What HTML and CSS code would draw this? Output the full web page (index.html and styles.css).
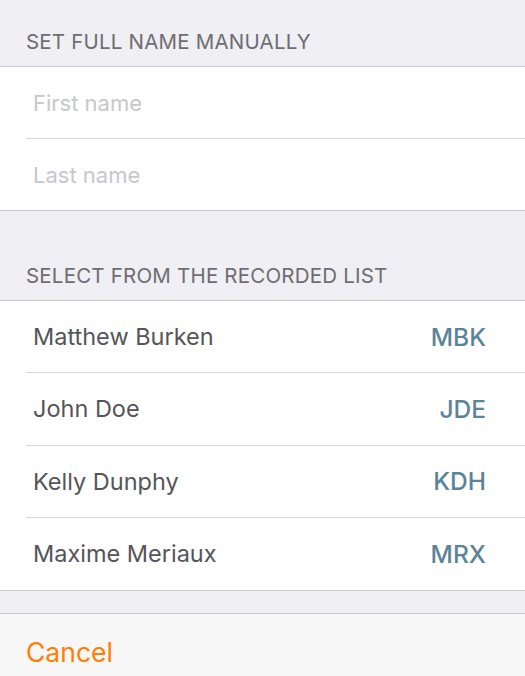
FILE: index.html
```html
<!DOCTYPE html>
<html lang="en">
<head>
    <meta charset="UTF-8">
    <meta name="viewport" content="width=device-width, initial-scale=1.0">
    <title>Select Name</title>
    <link rel="stylesheet" href="styles.css">
</head>
<body>
    <div class="sheet">
        <div class="section-header">SET FULL NAME MANUALLY</div>
        <div class="group">
            <div class="field"><input type="text" placeholder="First name"></div>
            <div class="field"><input type="text" placeholder="Last name"></div>
        </div>

        <div class="section-header second">SELECT FROM THE RECORDED LIST</div>
        <ul class="group people">
            <li><span class="name">Matthew Burken</span><span class="code">MBK</span></li>
            <li><span class="name">John Doe</span><span class="code">JDE</span></li>
            <li><span class="name">Kelly Dunphy</span><span class="code">KDH</span></li>
            <li><span class="name">Maxime Meriaux</span><span class="code">MRX</span></li>
        </ul>

        <div class="spacer"></div>
        <div class="footer">
            <a href="#" class="cancel">Cancel</a>
        </div>
    </div>
</body>
</html>
```

FILE: styles.css
```css
* {
    box-sizing: border-box;
}
html, body {
    margin: 0;
    height: 100%;
}
body {
    font-family: Inter, "Liberation Sans", Arial, sans-serif;
    background-color: #efeff4;
}
.sheet {
    display: flex;
    flex-direction: column;
    height: 100%;
}
.section-header {
    height: 67px;
    padding: 0 0 12px 26px;
    display: flex;
    align-items: flex-end;
    color: #6d6d72;
    font-size: 20.5px;
    letter-spacing: 0.2px;
    border-bottom: 1px solid #c8c7cc;
}
.section-header.second {
    height: 90px;
}
.group {
    background-color: white;
    margin: 0;
    padding: 0;
    list-style: none;
    border-bottom: 1px solid #c8c7cc;
}
.field {
    height: 71px;
    margin-left: 26px;
    display: flex;
    align-items: center;
}
.field + .field {
    border-top: 1px solid #d8d8dc;
    height: 72px;
}
.field input {
    border: none;
    outline: none;
    width: 100%;
    padding: 0 0 0 7px;
    font-family: inherit;
    font-size: 22px;
    color: #333;
    background: transparent;
}
.field input::placeholder {
    color: #c7c7cd;
}
.people li {
    height: 71px;
    margin-left: 26px;
    padding: 0 39px 0 7px;
    display: flex;
    align-items: center;
    justify-content: space-between;
    font-size: 23.5px;
}
.people li + li {
    height: 72.5px;
    border-top: 1px solid #d8d8dc;
}
.people .name {
    color: #555558;
}
.people .code {
    color: #5a8499;
    font-size: 24.5px;
    font-weight: 500;
}
.spacer {
    height: 23px;
    border-bottom: 1px solid #c8c7cc;
}
.footer {
    flex: 1;
    background-color: #f7f7f7;
    padding: 22px 26px 0;
}
.cancel {
    color: #ff8000;
    font-size: 26.5px;
    text-decoration: none;
}
```
